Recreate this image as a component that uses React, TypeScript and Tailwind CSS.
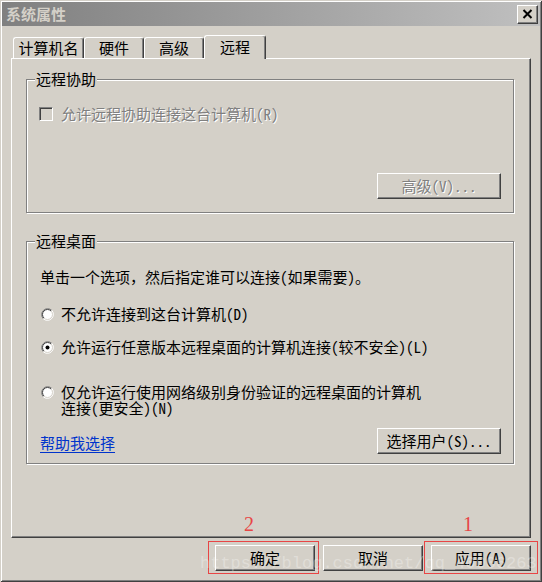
function Radio({ checked }: { checked?: boolean }) {
  return (
    <svg width="13" height="13" viewBox="0 0 13 13" className="shrink-0">
      <circle cx="6.5" cy="6.5" r="5.5" fill="#fff" />
      <path d="M2.26 10.74A6 6 0 0 1 10.74 2.26" fill="none" stroke="#808080" />
      <path d="M10.74 2.26A6 6 0 0 1 2.26 10.74" fill="none" stroke="#fff" />
      <path d="M2.96 10.04A5 5 0 0 1 10.04 2.96" fill="none" stroke="#404040" />
      <path d="M10.04 2.96A5 5 0 0 1 2.96 10.04" fill="none" stroke="#d4d0c8" />
      {checked && <circle cx="6.5" cy="6.5" r="2" fill="#000" />}
    </svg>
  )
}

function WinButton({
  children,
  className = "",
  disabled = false,
}: {
  children: React.ReactNode
  className?: string
  disabled?: boolean
}) {
  const tone = disabled ? "text-[#808080] [text-shadow:1px_1px_0_#fff]" : "text-black"
  return (
    <div
      className={`flex items-center justify-center bg-[#d4d0c8] border border-t-white border-l-white border-r-[#404040] border-b-[#404040] shadow-[inset_-1px_-1px_0_#808080] ${tone} ${className}`}
    >
      {children}
    </div>
  )
}

function GroupBox({
  title,
  className = "",
  children,
}: {
  title: string
  className?: string
  children: React.ReactNode
}) {
  return (
    <div
      className={`relative w-[488px] border border-[#808080] shadow-[inset_1px_1px_0_#fff,1px_1px_0_#fff] ${className}`}
    >
      <span className="absolute left-[8px] top-[-9px] bg-[#d4d0c8] px-px leading-[16px]">
        {title}
      </span>
      {children}
    </div>
  )
}

function Tab({ label, width, active = false }: { label: string; width: string; active?: boolean }) {
  if (active) {
    return (
      <div
        className={`relative z-10 mb-[-1px] flex h-[24px] ${width} items-start justify-center rounded-t-[3px] border-l border-t border-r border-l-white border-t-white border-r-[#404040] bg-[#d4d0c8] pt-[3px] shadow-[inset_-1px_0_0_#808080]`}
      >
        {label}
      </div>
    )
  }
  return (
    <div
      className={`flex h-[21px] ${width} items-start justify-center rounded-t-[3px] border-l border-t border-r border-l-white border-t-white border-r-[#404040] bg-[#d4d0c8] pt-[2px] shadow-[inset_-1px_0_0_#808080]`}
    >
      {label}
    </div>
  )
}

export default function App() {
  return (
    <div className="relative h-[582px] w-[542px] overflow-hidden bg-[#d4d0c8] p-[2px] font-['Noto_Sans_Mono_CJK_SC','Noto_Sans_CJK_SC',sans-serif] text-[15px] leading-[16px] text-black shadow-[inset_1px_1px_0_#d4d0c8,inset_-1px_-1px_0_#404040,inset_2px_2px_0_#fff,inset_-2px_-2px_0_#808080]">
      {/* title bar */}
      <div className="flex h-[24px] items-center justify-between bg-linear-to-r from-[#808080] to-[#c0c0c0] pl-[4px] pr-[2px]">
        <span className="font-bold text-[#d4d0c8]">系统属性</span>
        <div className="flex h-[19px] w-[21px] items-center justify-center border border-t-white border-l-white border-r-[#404040] border-b-[#404040] bg-[#d4d0c8] shadow-[inset_-1px_-1px_0_#808080]">
          <svg width="11" height="10" viewBox="0 0 11 10">
            <path d="M1.5 1L9.5 9M9.5 1L1.5 9" stroke="#000" strokeWidth="2" />
          </svg>
        </div>
      </div>

      <div className="pl-[9px] pt-[9px]">
        {/* tabs */}
        <div className="flex h-[23px] items-end pl-[2px]">
          <Tab label="计算机名" width="w-[71px]" />
          <Tab label="硬件" width="w-[60px]" />
          <Tab label="高级" width="w-[60px]" />
          <Tab label="远程" width="w-[62px]" active />
        </div>

        {/* tab panel */}
        <div className="h-[480px] w-[520px] border border-t-white border-l-white border-r-[#404040] border-b-[#404040] pl-[14px] pt-[20px] shadow-[inset_-1px_-1px_0_#808080]">
          <GroupBox title="远程协助" className="flex h-[134px] flex-col pl-[12px] pt-[26px]">
            <div className="flex h-[15px] items-center gap-[8px]">
              <div className="h-[14px] w-[14px] shrink-0 border border-t-[#808080] border-l-[#808080] border-r-white border-b-white bg-[#d4d0c8] shadow-[inset_1px_1px_0_#404040]" />
              <span className="text-[#808080] [text-shadow:1px_1px_0_#fff]">允许远程协助连接这台计算机(R)</span>
            </div>
            <WinButton disabled className="mr-[12px] mt-[52px] h-[26px] w-[124px] self-end">
              高级(V)...
            </WinButton>
          </GroupBox>

          <GroupBox title="远程桌面" className="mt-[28px] flex h-[223px] flex-col pl-[13px] pt-[27px]">
            <p>单击一个选项，然后指定谁可以连接(如果需要)。</p>

            <div className="mt-[21px] flex items-center gap-[7px]">
              <span className="ml-px flex">
                <Radio />
              </span>
              <span>不允许连接到这台计算机(D)</span>
            </div>

            <div className="mt-[17px] flex items-center gap-[7px]">
              <span className="ml-px flex">
                <Radio checked />
              </span>
              <span>允许运行任意版本远程桌面的计算机连接(较不安全)(L)</span>
            </div>

            <div className="mt-[29px] flex items-start gap-[7px]">
              <span className="ml-px mt-[2px] flex">
                <Radio />
              </span>
              <div className="flex flex-col">
                <span>仅允许运行使用网络级别身份验证的远程桌面的计算机</span>
                <span>连接(更安全)(N)</span>
              </div>
            </div>

            <div className="mt-[12px] flex items-center justify-between pr-[12px]">
              <a href="#" className="mt-[4px] text-[#0033cc] underline underline-offset-[3px]">
                帮助我选择
              </a>
              <WinButton className="h-[26px] w-[124px]">选择用户(S)...</WinButton>
            </div>
          </GroupBox>
        </div>

        {/* dialog buttons */}
        <div className="mt-[7px] flex gap-[8px] pl-[204px]">
          <WinButton className="h-[26px] w-[100px]">确定</WinButton>
          <WinButton className="h-[26px] w-[100px]">取消</WinButton>
          <WinButton className="h-[26px] w-[100px]">应用(A)</WinButton>
        </div>
      </div>

      {/* annotations */}
      <div className="pointer-events-none absolute left-[208px] top-[541px] h-[33px] w-[111px] border border-[#e84545]" />
      <div className="pointer-events-none absolute left-[424px] top-[541px] h-[33px] w-[114px] border border-[#e84545]" />
      <span className="pointer-events-none absolute left-[244px] top-[514px] font-['Liberation_Serif',serif] text-[20px] leading-[20px] text-[#e84545]">
        2
      </span>
      <span className="pointer-events-none absolute left-[463px] top-[514px] font-['Liberation_Serif',serif] text-[20px] leading-[20px] text-[#e84545]">
        1
      </span>
      <span className="pointer-events-none absolute left-[200px] top-[555px] font-['Liberation_Mono',monospace] text-[17px] leading-[17px] text-white/30">
        https://blog.csdn.net/qq_40006263
      </span>
    </div>
  )
}
